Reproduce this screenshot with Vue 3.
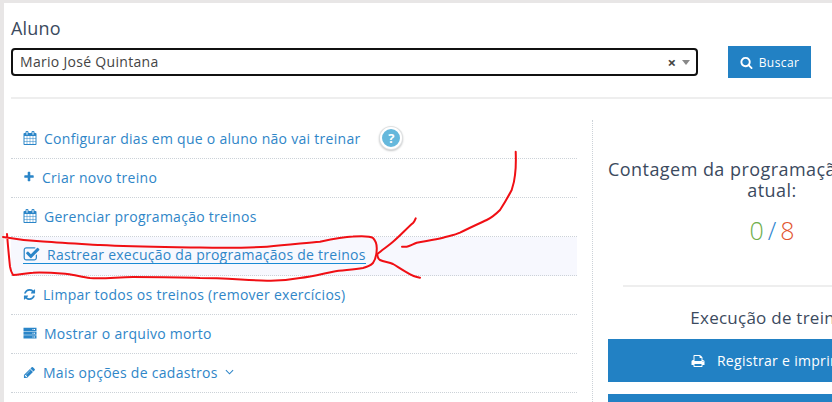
<script setup>
const calendar = 'M192 1664h288v-288h-288v288zm352 0h320v-288h-320v288zm-352-352h288v-320h-288v320zm352 0h320v-320h-320v320zm-352-384h288v-288h-288v288zm736 736h320v-288h-320v288zm-384-736h320v-288h-320v288zm768 736h288v-288h-288v288zm-384-352h320v-320h-320v320zm-352-864v-288q0-13-9.500-22.500t-22.500-9.500h-64q-13 0-22.500 9.500t-9.500 22.500v288q0 13 9.500 22.500t22.500 9.500h64q13 0 22.500-9.500t9.500-22.500zm736 864h288v-320h-288v320zm-384-384h320v-288h-320v288zm384 0h288v-288h-288v288zm32-480v-288q0-13-9.500-22.500t-22.500-9.500h-64q-13 0-22.500 9.500t-9.500 22.500v288q0 13 9.500 22.500t22.500 9.500h64q13 0 22.500-9.500t9.500-22.500zm384-64v1280q0 52-38 90t-90 38h-1408q-52 0-90-38t-38-90v-1280q0-52 38-90t90-38h128v-96q0-66 47-113t113-47h64q66 0 113 47t47 113v96h384v-96q0-66 47-113t113-47h64q66 0 113 47t47 113v96h128q52 0 90 38t38 90z'
const plus = 'M1600 736v192q0 40-28 68t-68 28h-416v416q0 40-28 68t-68 28h-192q-40 0-68-28t-28-68v-416h-416q-40 0-68-28t-28-68v-192q0-40 28-68t68-28h416v-416q0-40 28-68t68-28h192q40 0 68 28t28 68v416h416q40 0 68 28t28 68z'
const check = 'M1472 930v318q0 119-84.500 203.500t-203.500 84.500h-832q-119 0-203.500-84.500t-84.500-203.500v-832q0-119 84.500-203.500t203.500-84.500h832q63 0 117 25 15 7 18 23 3 17-9 29l-49 49q-10 10-23 10-3 0-9-2-23-6-45-6h-832q-66 0-113 47t-47 113v832q0 66 47 113t113 47h832q66 0 113-47t47-113v-254q0-13 9-22l64-64q10-10 23-10 6 0 12 3 20 8 20 29zm231-489l-814 814q-24 24-57 24t-57-24l-430-430q-24-24-24-57t24-57l110-110q24-24 57-24t57 24l263 263 647-647q24-24 57-24t57 24l110 110q24 24 24 57t-24 57z'
const refresh = 'M1639 1056q0 5-1 7-64 268-268 434.500t-478 166.500q-146 0-282.500-55t-243.500-157l-129 129q-19 19-45 19t-45-19-19-45v-448q0-26 19-45t45-19h448q26 0 45 19t19 45-19 45l-137 137q71 66 161 102t187 36q134 0 250-65t186-179q11-17 53-117 8-23 30-23h192q13 0 22.500 9.500t9.500 22.500zm25-800v448q0 26-19 45t-45 19h-448q-26 0-45-19t-19-45 19-45l138-138q-148-137-349-137-134 0-250 65t-186 179q-11 17-53 117-8 23-30 23h-199q-13 0-22.500-9.500t-9.500-22.500v-7q65-268 270-434.500t480-166.500q146 0 284 55.500t245 156.500l130-129q19-19 45-19t45 19 19 45z'
const server = 'M64 224h1664v416h-1664zM64 704h1664v416h-1664zM64 1184h1664v416h-1664zM1408 368h128v128h-128zM1216 368h128v128h-128zM1408 848h128v128h-128zM1216 848h128v128h-128zM1408 1328h128v128h-128zM1216 1328h128v128h-128z'
const pencil = 'M491 1536l91-91-235-235-91 91v107h128v128h107zm523-928q0-22-22-22-10 0-17 7l-542 542q-7 7-7 17 0 22 22 22 10 0 17-7l542-542q7-7 7-17zm-54-192l416 416-832 832h-416v-416zm683 96q0 53-37 90l-166 166-416-416 166-165q36-38 90-38 53 0 91 38l235 234q37 39 37 91z'
const search = 'M1216 832q0-185-131.500-316.500t-316.500-131.500-316.500 131.500-131.500 316.500 131.500 316.500 316.500 131.500 316.500-131.500 131.500-316.500zm512 832q0 52-38 90t-90 38q-54 0-90-38l-343-342q-179 124-399 124-143 0-273.500-55.500t-225-150-150-225-55.500-273.500 55.500-273.500 150-225 225-150 273.500-55.500 273.500 55.500 225 150 150 225 55.500 273.500q0 220-124 399l343 343q37 37 37 90z'
const print = 'M448 1536h896v-256h-896v256zm0-640h896v-384h-160q-40 0-68-28t-28-68v-160h-640v640zm1152 64q0-26-19-45t-45-19-45 19-19 45 19 45 45 19 45-19 19-45zm128 0v416q0 13-9.500 22.500t-22.500 9.500h-224v160q0 40-28 68t-68 28h-960q-40 0-68-28t-28-68v-160h-224q-13 0-22.500-9.500t-9.500-22.500v-416q0-79 56.500-135.500t135.500-56.500h64v-544q0-40 28-68t68-28h672q40 0 88 20t76 48l152 152q28 28 48 76t20 88v256h64q79 0 135.500 56.500t56.500 135.500z'

const rows = [
  { icon: calendar, box: 14, gap: 7, text: 'Configurar dias em que o aluno não vai treinar', help: true },
  { icon: plus, box: 12, gap: 7, text: 'Criar novo treino' },
  { icon: calendar, box: 14, gap: 7, text: 'Gerenciar programação treinos' },
  { icon: check, box: 17, gap: 7, text: 'Rastrear execução da programaçãos de treinos', active: true },
  { icon: refresh, box: 13, gap: 7, text: 'Limpar todos os treinos (remover exercícios)' },
  { icon: server, box: 14, gap: 7, text: 'Mostrar o arquivo morto' },
  { icon: pencil, box: 13, gap: 7, text: 'Mais opções de cadastros', caret: true }
]

const loop = 'M3 237 C20 240 32 241 43 241.600 C62 243 82 244 100 245 C135 247 168 247 200 247.600 C225 248 247 248 267 246.700 C288 245 305 243 320 241.700 C333 239 343 237 353 236.600 C362 236 370 236 373 238 C376 241 377 246 376.700 250 C376.500 256 375 260 373 263 C370 266 367 267 363 268 C352 270 342 270 333 271.700 C322 274 311 277 300 278 C289 280 278 281 267 280.700 C245 280 222 278 200 278 C178 277 155 277 133 277 C118 277 104 279 90 278 C82 277 75 275 67 274 C55 273 44 272 33 272.700 C25 273 19 275 13 275 C11 272 10.500 270 10 266.700 C9 257 8 247 7 234'
const arrow = 'M515.700 151.700 C516 160 516 168 515 175 C514.500 181 513 186 511.700 190 C508 197 504 204 500 210 C496 214 491 218 486.700 220 C478 224 469 228 460 232.700 C455 235 449 236 443 237.700 C434 240 425 241 416.700 242.700 C413 244 410 246 406.700 246.700 L402 246.700'
const head = 'M415.700 218.300 C415 220 414 222 413 223 C406 229 400 236 393 241.700 C388 246 382 250 377.300 254 C377.500 257 378 259 380 260 C384 262 389 262 393 264 C398 267 402 270 406.700 272.300 C411 275 415 277 420 277.700'
</script>

<template>
  <div class="page">
    <div class="card">
      <h3 class="title">Aluno</h3>
      <div class="search-row">
        <div class="select">
          <span class="select-value">Mario José Quintana</span>
          <span class="select-clear">×</span>
          <span class="select-arrow"></span>
        </div>
        <button class="btn-search" type="button">
          <svg viewBox="0 0 1792 1792" width="13" height="13"><path :d="search" fill="#fff" /></svg>
          Buscar
        </button>
      </div>
      <hr class="sep" />

      <div class="columns">
        <ul class="menu">
          <li v-for="row in rows" :key="row.text" class="menu-item" :class="{ active: row.active }">
            <a class="menu-link" :style="{ gap: row.gap + 'px' }">
              <svg class="menu-icon" viewBox="0 0 1792 1792" :width="row.box" :height="row.box"><path :d="row.icon" fill-rule="evenodd" /></svg>
              <span>{{ row.text }}</span>
              <svg v-if="row.caret" class="caret" viewBox="0 0 10 6" width="9" height="6"><path d="M1 1l4 4 4-4" /></svg>
            </a>
            <span v-if="row.help" class="help">?</span>
          </li>
        </ul>

        <aside class="side">
          <div class="side-inner">
            <h4 class="count-title">Contagem da programação de treinos<br />atual:</h4>
            <div class="count"><span class="done">0</span><span class="slash">/</span><span class="total">8</span></div>
            <hr class="side-sep" />
            <h4 class="exec-title">Execução de treinos</h4>
            <button class="btn-wide" type="button">
              <svg viewBox="0 0 1792 1792" width="14" height="14"><path :d="print" fill="#fff" /></svg>
              Registrar e imprimir
            </button>
            <button class="btn-wide" type="button"></button>
          </div>
        </aside>
      </div>
    </div>

    <svg class="ink" viewBox="0 0 832 402" width="832" height="402">
      <path :d="loop" />
      <path :d="arrow" />
      <path :d="head" />
    </svg>
  </div>
</template>

<style>
html, body {
  margin: 0;
  height: 402px;
  overflow: hidden;
  background: #e8e6e6;
}
</style>

<style scoped>
.page {
  position: relative;
  width: 832px;
  height: 402px;
  overflow: hidden;
  padding: 3px 0 0 4px;
  box-sizing: border-box;
  font-family: "Open Sans", sans-serif;
}
.card {
  background: #fff;
  height: 399px;
  width: 828px;
  padding: 14px 0 0 7px;
  box-sizing: border-box;
  overflow: hidden;
}
.title {
  margin: 0;
  font-size: 18px;
  line-height: 22px;
  font-weight: 400;
  letter-spacing: 0.2px;
  color: #3b4a5e;
}
.search-row {
  display: flex;
  align-items: center;
  margin-top: 7px;
}
.select {
  width: 687px;
  height: 28px;
  box-sizing: border-box;
  border: 2px solid #111;
  border-radius: 4px;
  display: flex;
  align-items: center;
  padding: 0 6px 0 7px;
}
.select-value {
  flex: 1;
  font-size: 14px;
  line-height: 18px;
  margin-top: -1px;
  letter-spacing: 0.3px;
  color: #444;
}
.select-clear {
  font-size: 15px;
  font-weight: 700;
  line-height: 1;
  color: #444;
  margin-right: 6px;
}
.select-arrow {
  width: 0;
  height: 0;
  border-left: 4px solid transparent;
  border-right: 4px solid transparent;
  border-top: 5px solid #888;
}
.btn-search {
  margin-left: 30px;
  width: 83px;
  height: 32px;
  border: 0;
  background: #2281c4;
  color: #fff;
  font-family: inherit;
  font-size: 12px;
  letter-spacing: 0.4px;
  display: flex;
  align-items: center;
  justify-content: center;
  gap: 6px;
  padding: 0;
}
.sep {
  margin: 19px 0 0;
  border: 0;
  border-top: 2px solid #eeeeee;
}
.columns {
  display: grid;
  grid-template-columns: 566px 360px;
  column-gap: 15px;
  margin-top: 21px;
}
.menu {
  list-style: none;
  margin: 0;
  padding: 0;
}
.menu-item {
  height: 39px;
  box-sizing: border-box;
  border-bottom: 1px dotted #ccd2d8;
  display: flex;
  align-items: center;
  padding: 0 0 2px 12px;
  font-size: 14px;
  letter-spacing: 0.28px;
  color: #2f86c8;
}
.menu-item.active {
  background: #f7f8fe;
  letter-spacing: 0.26px;
}
.menu-link {
  display: inline-flex;
  align-items: center;
  white-space: nowrap;
}
.menu-item.active .menu-link {
  border-bottom: 1px solid #1a8ad4;
  line-height: 17px;
}
.menu-icon {
  fill: #2a85c8;
  flex: none;
}
.caret {
  fill: none;
  stroke: #2f86c8;
  stroke-width: 1.200;
}
.help {
  width: 18px;
  height: 18px;
  margin-left: 20px;
  border-radius: 50%;
  background: #65b8dc;
  border: 2px solid #fff;
  box-shadow: 0 0 0 1px #dfe1e2, 0 1px 2px 1px #c4c6c7;
  color: #fff;
  font-size: 13px;
  font-weight: 700;
  line-height: 18px;
  text-align: center;
}
.side {
  border-left: 1px dotted #ccd2d8;
  padding-left: 15px;
  height: 300px;
}
.side-inner {
  width: 328px;
  padding-top: 39px;
  text-align: center;
}
.count-title {
  margin: 0;
  font-size: 18px;
  line-height: 21px;
  font-weight: 400;
  letter-spacing: 0.45px;
  color: #3b4a5e;
  white-space: nowrap;
}
.count {
  margin-top: 13px;
  font-size: 25px;
  line-height: 32px;
  font-weight: 300;
}
.done { color: #6fae4b; }
.slash { color: #2f86d0; margin: 0 4px; }
.total { color: #e2552f; }
.side-sep {
  margin: 39px 0 0 15px;
  border: 0;
  border-top: 2px solid #eeeeee;
}
.exec-title {
  margin: 19px 0 0;
  font-size: 17px;
  line-height: 24px;
  font-weight: 400;
  letter-spacing: 0.25px;
  color: #3b4a5e;
}
.btn-wide {
  display: flex;
  align-items: center;
  justify-content: center;
  gap: 12px;
  width: 100%;
  height: 43px;
  margin-top: 9px;
  border: 0;
  padding: 0;
  background: #2281c4;
  color: #fff;
  font-family: inherit;
  font-size: 14px;
  letter-spacing: 0.3px;
}
.btn-wide + .btn-wide {
  margin-top: 12px;
}
.ink {
  position: absolute;
  left: 0;
  top: 0;
  pointer-events: none;
  fill: none;
  stroke: #f00f14;
  stroke-width: 2;
  stroke-linecap: round;
  stroke-linejoin: round;
}
</style>
